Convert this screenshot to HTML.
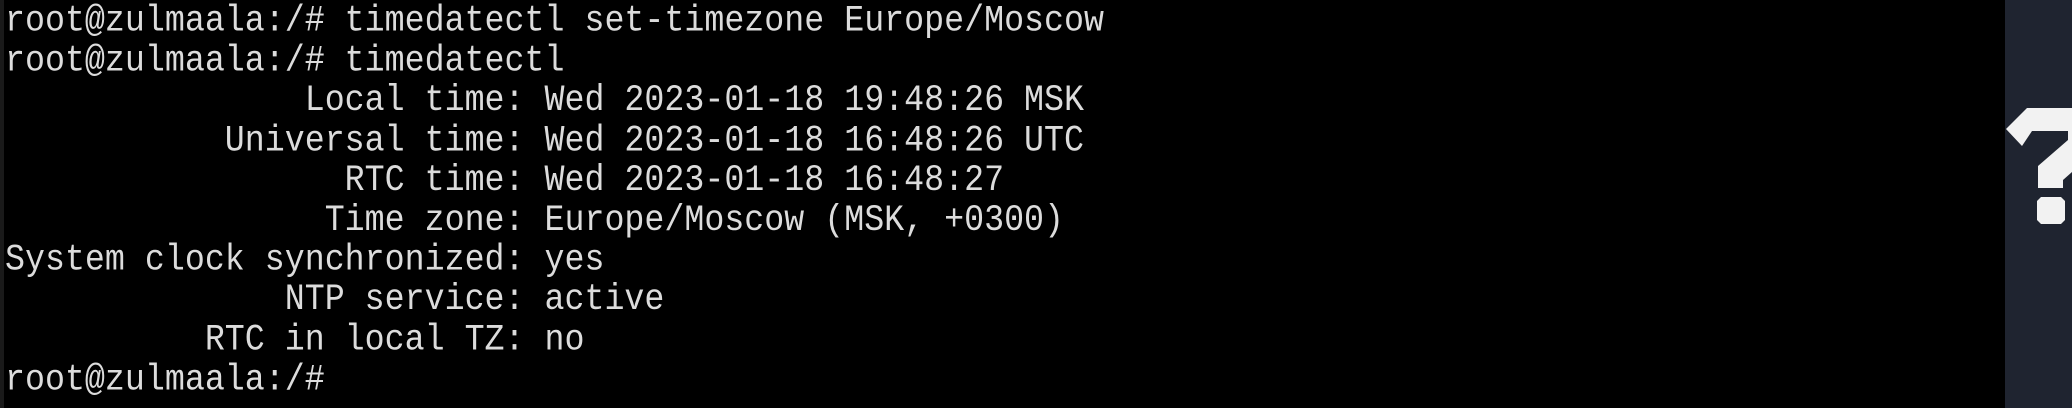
<!DOCTYPE html>
<html><head><meta charset="utf-8"><style>
html,body{margin:0;padding:0;background:#000;width:2072px;height:408px;overflow:hidden;position:relative}
pre{position:absolute;left:5px;top:1px;margin:0;font-family:"Liberation Mono","DejaVu Sans Mono",monospace;font-size:33.3px;line-height:36.2px;color:#dcdcdc;transform:scaleY(1.1);transform-origin:0 0}
.strip{position:absolute;left:0;top:0;width:4px;height:408px;background:#1a1a1a}
.panel{position:absolute;left:2005px;top:0;width:67px;height:408px;background:#1f2430}
svg{position:absolute;left:0;top:0}
</style></head><body>
<div class="strip"></div>
<pre>root@zulmaala:/# timedatectl set-timezone Europe/Moscow
root@zulmaala:/# timedatectl
               Local time: Wed 2023-01-18 19:48:26 MSK
           Universal time: Wed 2023-01-18 16:48:26 UTC
                 RTC time: Wed 2023-01-18 16:48:27
                Time zone: Europe/Moscow (MSK, +0300)
System clock synchronized: yes
              NTP service: active
          RTC in local TZ: no
root@zulmaala:/#</pre>
<div class="panel"></div>
<svg width="2072" height="408" viewBox="0 0 2072 408">
<polygon fill="#f2f2f2" points="2006,129 2027,108 2072,108 2072,172 2063,180 2063,188 2038,188 2038,166 2068,140 2068,131 2032,131 2022,146"/>
<polygon fill="#f2f2f2" points="2041,197 2061,197 2065,201 2065,220 2061,224 2041,224 2037,220 2037,201"/>
</svg>
</body></html>
